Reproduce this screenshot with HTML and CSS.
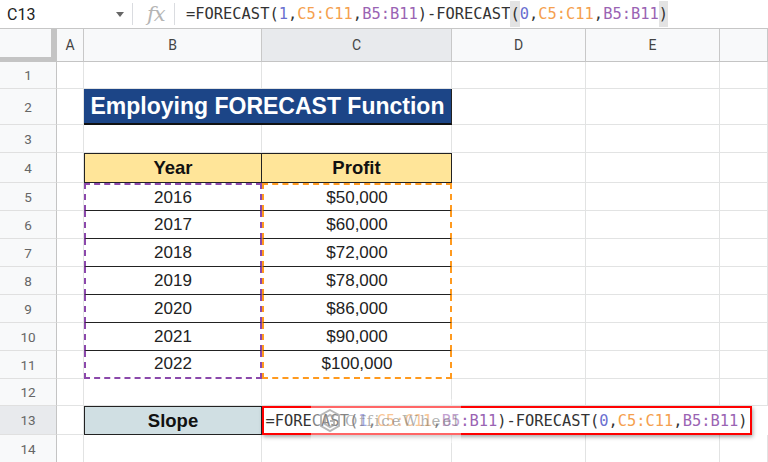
FILE: index.html
```html
<!DOCTYPE html>
<html>
<head>
<meta charset="utf-8">
<link rel="stylesheet" href="styles.css">
</head>
<body>
<div class="fbar">
  <div class="namebox">C13</div>
  <div class="caret"></div>
  <div class="sep sep1"></div>
  <div class="fx">fx</div>
  <div class="sep sep2"></div>
  <div class="formula mono">=FORECAST(<span class="n">1</span>,<span class="o">C5:C11</span>,<span class="p">B5:B11</span>)-FORECAST<span class="hl">(</span><span class="n">0</span>,<span class="o">C5:C11</span>,<span class="p">B5:B11</span><span class="hl">)</span></div>
</div>
<div class="sheet">
  <div class="corner"></div><div class="ch">A</div><div class="ch">B</div><div class="ch sel">C</div><div class="ch">D</div><div class="ch">E</div><div class="ch"></div>

  <div class="rh">1</div><div class="c"></div><div class="c"></div><div class="c"></div><div class="c"></div><div class="c"></div><div class="c"></div>

  <div class="rh">2</div><div class="c"></div><div class="title">Employing FORECAST Function</div><div class="c"></div><div class="c"></div><div class="c"></div>

  <div class="rh">3</div><div class="c"></div><div class="c"></div><div class="c"></div><div class="c"></div><div class="c"></div><div class="c"></div>

  <div class="rh">4</div><div class="c"></div><div class="tb hdr">Year</div><div class="tc hdr">Profit</div><div class="c"></div><div class="c"></div><div class="c"></div>

  <div class="rh">5</div><div class="c"></div><div class="tb db first">2016</div><div class="tc dc first">$50,000</div><div class="c"></div><div class="c"></div><div class="c"></div>
  <div class="rh">6</div><div class="c"></div><div class="tb db">2017</div><div class="tc dc">$60,000</div><div class="c"></div><div class="c"></div><div class="c"></div>
  <div class="rh">7</div><div class="c"></div><div class="tb db">2018</div><div class="tc dc">$72,000</div><div class="c"></div><div class="c"></div><div class="c"></div>
  <div class="rh">8</div><div class="c"></div><div class="tb db">2019</div><div class="tc dc">$78,000</div><div class="c"></div><div class="c"></div><div class="c"></div>
  <div class="rh">9</div><div class="c"></div><div class="tb db">2020</div><div class="tc dc">$86,000</div><div class="c"></div><div class="c"></div><div class="c"></div>
  <div class="rh">10</div><div class="c"></div><div class="tb db">2021</div><div class="tc dc">$90,000</div><div class="c"></div><div class="c"></div><div class="c"></div>
  <div class="rh">11</div><div class="c"></div><div class="tb db last">2022</div><div class="tc dc last">$100,000</div><div class="c"></div><div class="c"></div><div class="c"></div>

  <div class="rh">12</div><div class="c"></div><div class="c"></div><div class="c"></div><div class="c"></div><div class="c"></div><div class="c"></div>

  <div class="rh sel">13</div><div class="c"></div><div class="slope">Slope</div>
  <div class="fcell mono">=FORECAST(<span class="n">1</span>,<span class="o">C5:C11</span>,<span class="p">B5:B11</span>)-FORECAST(<span class="n">0</span>,<span class="o">C5:C11</span>,<span class="p">B5:B11</span>)
    <div class="wm">
      <svg class="wmlogo" width="22" height="24" viewBox="0 0 22 24"><path d="M11 1 L20 6 L20 17 L11 22 L2 17 L2 6 Z" fill="none" stroke="#9a9a9a" stroke-width="2"/><path d="M15 8 L11 6 L6 9 L6 15 L11 18 L15 16 L15 12 L11 12" fill="none" stroke="#9a9a9a" stroke-width="2"/></svg>
      <span class="wmtext">OfficeWheel</span>
    </div>
  </div>

  <div class="rh">14</div><div class="c"></div><div class="c"></div><div class="c"></div><div class="c"></div><div class="c"></div><div class="c"></div>
</div>
</body>
</html>
```
FILE: styles.css
```css
* { box-sizing: border-box; }
html, body { margin: 0; padding: 0; background: #fff; overflow: hidden; }
body { width: 768px; height: 462px; font-family: "Liberation Sans", Arial, sans-serif; }

.mono { font-family: "DejaVu Sans Mono", "Liberation Mono", monospace; font-size: 15.4px; color: #333; white-space: nowrap; }
.n { color: #6a6fd0; }
.o { color: #f5a04e; }
.p { color: #9a63b3; }
.hl { background: #e3e3e3; padding: 4px 0; }

.fbar {
  height: 29px;
  display: flex;
  align-items: center;
  border-bottom: 1px solid #c6c6c6;
  background: #fff;
}
.namebox { width: 116px; padding-left: 7px; font-family: Roboto, "Liberation Sans", sans-serif; font-size: 16px; color: #222; }
.caret { width: 0; height: 0; border-left: 4.5px solid transparent; border-right: 4.5px solid transparent; border-top: 5px solid #666; }
.sep { width: 1px; height: 22px; background: #dadce0; }
.sep1 { margin-left: 8px; }
.fx { width: 41px; padding-left: 14px; font-family: "DejaVu Serif", "Liberation Serif", serif; font-style: italic; font-size: 21px; color: #b5b5b5; letter-spacing: -1px; }
.sep2 { margin-left: 0; }
.formula { margin-left: 11px; }

.sheet {
  display: grid;
  grid-template-columns: 57px 27px 178px 190px 134px 134px 1fr;
  grid-template-rows: 33px 27px 36px 28px 30px repeat(7, 28px) 27px 29px 28px;
}
.corner { background: #f8f9fa; border-right: 6px solid #c4c4c4; border-bottom: 5px solid #c4c4c4; }
.ch {
  background: #f8f9fa;
  border-right: 1px solid #c8c8c8;
  border-bottom: 1px solid #c4c4c4;
  display: flex; align-items: center; justify-content: center;
  font-family: Roboto, "Liberation Sans", sans-serif; font-size: 14px; color: #444;
}
.ch.sel { background: #e8eaed; }
.rh {
  background: #f8f9fa;
  border-right: 1px solid #c4c4c4;
  border-bottom: 1px solid #e0e0e0;
  display: flex; align-items: center; justify-content: center;
  font-family: Roboto, "Liberation Sans", sans-serif; font-size: 13.5px; color: #666;
}
.rh.sel { background: #e8eaed; }
.c { border-right: 1px solid #e2e3e3; border-bottom: 1px solid #e2e3e3; }

.title {
  grid-column: span 2;
  background: #1c4587;
  color: #fff;
  font-weight: bold;
  font-size: 23px;
  display: flex; align-items: center; justify-content: center;
  border-bottom: 2px solid #111;
  border-right: 1px solid #222;
}

.tb, .tc, .slope {
  display: flex; align-items: center; justify-content: center;
  font-size: 17px; color: #222;
}
.tb { border-left: 1px solid #222; border-right: 1px solid #222; border-bottom: 1px solid #222; }
.tc { border-right: 1px solid #222; border-bottom: 1px solid #222; }
.hdr { background: #ffe599; font-weight: bold; font-size: 18.5px; color: #111; border-top: 1px solid #222; }

.db { border-left: 2px dashed #8b48ab; border-right: 2px dashed #8b48ab; }
.db.first { border-top: 2px dashed #8b48ab; }
.db.last { border-bottom: 2px dashed #8b48ab; }
.dc { border-left: 2px dashed #ff9a1f; border-right: 2px dashed #ff9a1f; }
.dc.first { border-top: 2px dashed #ff9a1f; }
.dc.last { border-bottom: 2px dashed #ff9a1f; }

.slope {
  background: #d0dfe3;
  font-weight: bold; font-size: 18.5px; color: #111;
  border: 1px solid #222;
}

.fcell {
  grid-column: 4 / 8;
  justify-self: start;
  width: 490px;
  border: 2.5px solid #f00;
  box-shadow: 1px 2px 4px rgba(0,0,0,0.35);
  background: #fff;
  display: flex; align-items: center;
  padding-left: 1.5px;
  position: relative;
  z-index: 2;
}
.wm {
  position: absolute;
  left: 47px; top: -9px;
  width: 150px; height: 44px;
  background: rgba(255,255,255,0.4);
  display: flex; align-items: center; gap: 4px;
  padding-left: 8px;
}
.wmlogo { opacity: 0.7; }
.wmtext { font-family: "DejaVu Serif", "Liberation Serif", serif; font-size: 15px; letter-spacing: 2px; color: rgba(110,110,110,0.55); }
```
